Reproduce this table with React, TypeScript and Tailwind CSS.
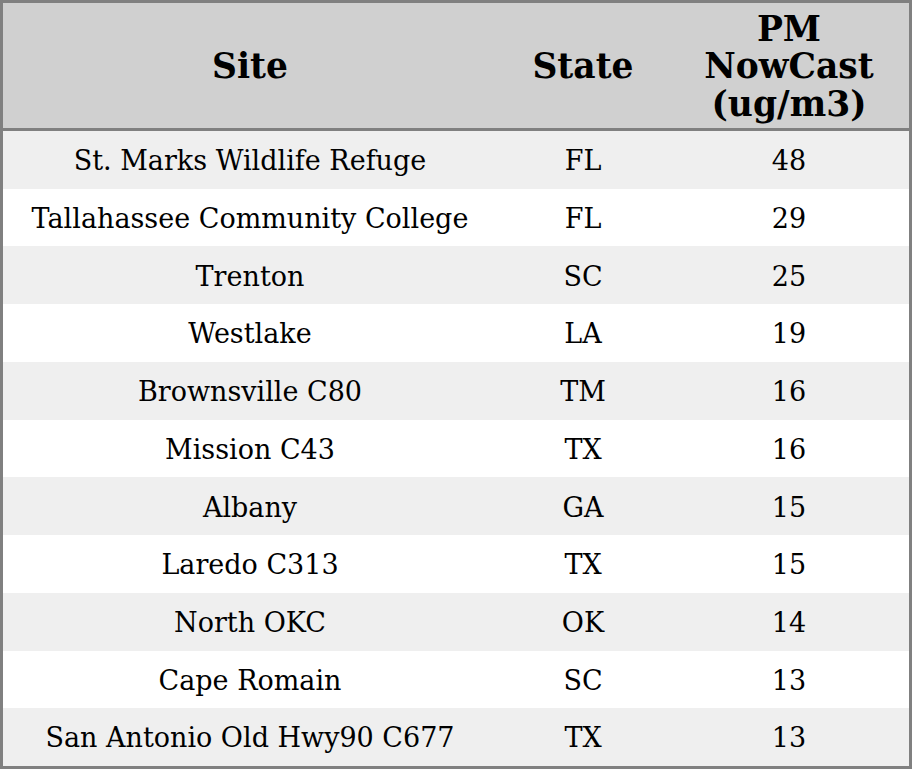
const rows: [string, string, number][] = [
  ['St. Marks Wildlife Refuge', 'FL', 48],
  ['Tallahassee Community College', 'FL', 29],
  ['Trenton', 'SC', 25],
  ['Westlake', 'LA', 19],
  ['Brownsville C80', 'TM', 16],
  ['Mission C43', 'TX', 16],
  ['Albany', 'GA', 15],
  ['Laredo C313', 'TX', 15],
  ['North OKC', 'OK', 14],
  ['Cape Romain', 'SC', 13],
  ['San Antonio Old Hwy90 C677', 'TX', 13],
]

export default function App() {
  return (
    <div className="w-[912px] h-[769px] bg-white">
      <div
        className="flex flex-col h-full border-[3px] border-[#808080] text-black"
        style={{ fontFamily: '"DejaVu Serif", serif' }}
      >
        <div className="grid grid-cols-[494px_172px_1fr] h-[125px] shrink-0 bg-[#d0d0d0] border-b-[3px] border-[#808080] box-content font-bold text-[34.5px] leading-[37.5px]">
          <div className="flex items-center justify-center pt-[2px]">Site</div>
          <div className="flex items-center justify-center pt-[2px]">State</div>
          <div className="flex items-center justify-center text-center pt-[3px]">
            PM
            <br />
            NowCast
            <br />
            (ug/m3)
          </div>
        </div>
        {rows.map(([site, state, value], i) => (
          <div
            key={site}
            className={`grid grid-cols-[494px_172px_1fr] flex-1 items-center pt-[3px] text-center text-[27px] ${
              i % 2 === 0 ? 'bg-[#efefef]' : 'bg-white'
            }`}
          >
            <div>{site}</div>
            <div>{state}</div>
            <div>{value}</div>
          </div>
        ))}
      </div>
    </div>
  )
}
